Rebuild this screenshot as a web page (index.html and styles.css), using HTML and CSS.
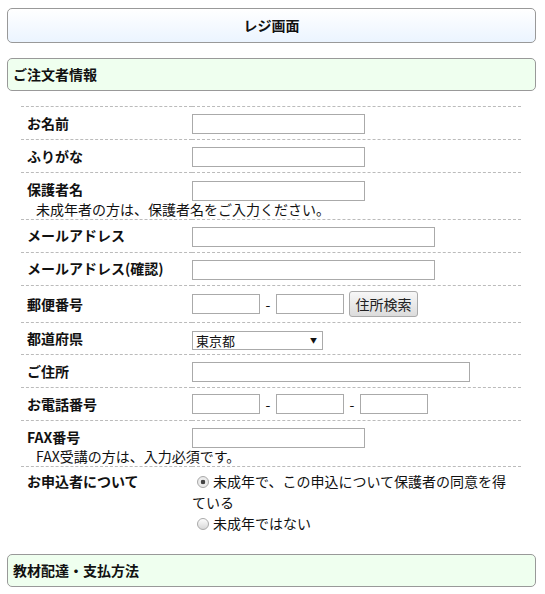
FILE: index.html
```html
<!DOCTYPE html>
<html lang="ja">
<head>
    <meta charset="UTF-8">
    <meta name="viewport" content="width=device-width, initial-scale=1.0">
    <title>レジ画面</title>
    <link rel="stylesheet" href="styles.css">
</head>
<body>
    <div class="page">
        <h1 class="page-title">レジ画面</h1>

        <!-- 注文者情報 -->
        <h2 class="section-title">ご注文者情報</h2>

        <table class="form-table">
            <tr>
                <th>お名前</th>
                <td><input type="text" class="input-m"></td>
            </tr>
            <tr>
                <th>ふりがな</th>
                <td><input type="text" class="input-m"></td>
            </tr>
            <tr class="has-note">
                <th>保護者名</th>
                <td><input type="text" class="input-m"></td>
            </tr>
            <tr class="note-row">
                <td colspan="2">未成年者の方は、保護者名をご入力ください。</td>
            </tr>
            <tr>
                <th>メールアドレス</th>
                <td><input type="text" class="input-l"></td>
            </tr>
            <tr>
                <th>メールアドレス(確認)</th>
                <td><input type="text" class="input-l"></td>
            </tr>
            <tr>
                <th>郵便番号</th>
                <td>
                    <div class="field-group">
                        <input type="text" class="input-s">
                        <span class="dash">-</span>
                        <input type="text" class="input-s">
                        <button type="button" class="search-btn">住所検索</button>
                    </div>
                </td>
            </tr>
            <tr class="select-row">
                <th>都道府県</th>
                <td>
                    <span class="select-wrap">
                        <select>
                            <option>東京都</option>
                        </select>
                    </span>
                </td>
            </tr>
            <tr>
                <th>ご住所</th>
                <td><input type="text" class="input-xl"></td>
            </tr>
            <tr>
                <th>お電話番号</th>
                <td>
                    <div class="field-group">
                        <input type="text" class="input-s">
                        <span class="dash">-</span>
                        <input type="text" class="input-s">
                        <span class="dash">-</span>
                        <input type="text" class="input-s">
                    </div>
                </td>
            </tr>
            <tr class="has-note">
                <th>FAX番号</th>
                <td><input type="text" class="input-m"></td>
            </tr>
            <tr class="note-row">
                <td colspan="2">FAX受講の方は、入力必須です。</td>
            </tr>
            <tr class="radio-row">
                <th>お申込者について</th>
                <td>
                    <label class="radio"><input type="radio" name="applicant" checked>未成年で、この申込について保護者の同意を得ている</label>
                    <label class="radio"><input type="radio" name="applicant">未成年ではない</label>
                </td>
            </tr>
        </table>

        <!-- 配達・支払 -->
        <h2 class="section-title">教材配達・支払方法</h2>
    </div>
</body>
</html>
```

FILE: styles.css
```css
body {
    margin: 0;
    font-family: "Noto Sans CJK JP", "Noto Sans", sans-serif;
    font-size: 14px;
    line-height: 20px;
    color: #111;
    background-color: #fff;
}
.page {
    width: 529px;
    margin-left: 7px;
    padding-top: 8px;
}
.page-title {
    box-sizing: border-box;
    height: 35px;
    margin: 0;
    border: 1px solid #999;
    border-radius: 5px;
    background: linear-gradient(#ffffff, #ebf4ff);
    font-size: 14px;
    line-height: 32px;
    text-align: center;
}
.section-title {
    box-sizing: border-box;
    height: 33px;
    margin: 15px 0 0;
    padding-left: 5px;
    border: 1px solid #999;
    border-radius: 5px;
    background-color: #efffef;
    font-size: 14px;
    line-height: 30px;
}
.form-table {
    width: 500px;
    margin: 15px 0 13px 14px;
    border-collapse: collapse;
}
.form-table tr {
    border-top: 1px dashed #bbb;
}
.form-table th {
    width: 165px;
    padding: 4px 0 5px 6px;
    font-weight: bold;
    text-align: left;
    vertical-align: middle;
    white-space: nowrap;
}
.form-table td {
    height: 22px;
    padding: 5px 0;
    vertical-align: middle;
}
.form-table .has-note th,
.form-table .has-note td {
    padding-bottom: 0;
}
.form-table .select-row td {
    padding-bottom: 4px;
}
.form-table .note-row {
    border-top: none;
}
.form-table .note-row td {
    height: 18px;
    padding: 0 0 0 15px;
    line-height: 17px;
    vertical-align: top;
}
input[type="text"] {
    box-sizing: border-box;
    height: 20px;
    margin: 0;
    padding: 0 3px;
    border: 1px solid #aaa;
    vertical-align: middle;
}
.input-s { width: 68px; }
.input-m { width: 173px; }
.input-l { width: 243px; }
.input-xl { width: 278px; }
.field-group {
    display: flex;
    align-items: center;
}
.dash {
    width: 16px;
    text-align: center;
}
.search-btn {
    width: 69px;
    height: 26px;
    margin-left: 5px;
    padding: 0;
    border: 1px solid #aaa;
    border-radius: 3px;
    background: linear-gradient(#f7f7f7, #dcdcdc);
    font-family: inherit;
    font-size: 14px;
    color: #222;
}
.select-wrap {
    position: relative;
    display: inline-block;
    height: 19px;
    vertical-align: middle;
}
.select-wrap select {
    display: block;
    box-sizing: border-box;
    width: 131px;
    height: 19px;
    margin: 0;
    padding: 0 0 0 3px;
    border: 1px solid #aaa;
    background-color: #fff;
    font-family: inherit;
    font-size: 13px;
    line-height: 17px;
    color: #111;
    appearance: none;
    -webkit-appearance: none;
}
.select-wrap::after {
    content: "▼";
    position: absolute;
    right: 6px;
    top: 4px;
    font-size: 7px;
    line-height: 10px;
    pointer-events: none;
}
.form-table .radio-row th {
    padding-top: 4px;
    vertical-align: top;
    line-height: 21px;
}
.form-table .radio-row td {
    padding-top: 4px;
    padding-right: 12px;
    line-height: 21px;
}
.radio {
    display: block;
}
.radio input {
    box-sizing: border-box;
    width: 12px;
    height: 12px;
    margin: 0 4px 0 5px;
    border: 1px solid #aaa;
    border-radius: 50%;
    background: linear-gradient(#fdfdfd, #d8d8d8);
    vertical-align: -1px;
    appearance: none;
    -webkit-appearance: none;
}
.radio input:checked {
    background: radial-gradient(circle, #444 0, #444 2px, #eee 2.6px, #e2e2e2 100%);
}
```
